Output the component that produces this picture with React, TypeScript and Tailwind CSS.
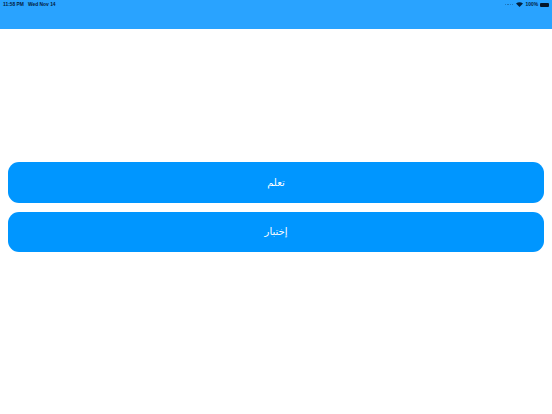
import React from "react";

const Btn = ({ label }: { label: string }) => (
  <button className="h-[40.5px] w-full rounded-[11px] bg-[#0096ff] text-white text-[10px] font-['DejaVu_Sans',serif] flex items-center justify-center">
    <span dir="rtl">{label}</span>
  </button>
);

export default function App() {
  return (
    <div className="w-[552px] h-[414px] bg-white flex flex-col overflow-hidden font-['Liberation_Sans',sans-serif]">
      <header className="h-[28.5px] shrink-0 bg-[#29a3ff] flex items-start justify-between pl-[3px] pr-[3px] pt-[1px] text-[4.9px] leading-[7px] text-[#04203c] font-bold">
        <div className="flex gap-[4px]">
          <span>11:58 PM</span>
          <span>Wed Nov 14</span>
        </div>
        <div className="flex items-center gap-[2px]">
          <span className="flex gap-[1px] mr-[1px]">
            <i className="w-[1.2px] h-[1.2px] rounded-full bg-[#1a6fb0]" />
            <i className="w-[1.2px] h-[1.2px] rounded-full bg-[#1a6fb0]" />
            <i className="w-[1.2px] h-[1.2px] rounded-full bg-[#1a6fb0]" />
            <i className="w-[1.2px] h-[1.2px] rounded-full bg-[#1a6fb0]" />
          </span>
          <svg width="7" height="5" viewBox="0 0 14 10" className="mr-[0.5px]">
            <path d="M7 10 L0 3 Q7 -2 14 3 Z" fill="#04203c" />
          </svg>
          <span>100%</span>
          <span className="w-[9px] h-[4px] rounded-[1px] bg-[#04162b]" />
        </div>
      </header>
      <main className="flex flex-col gap-[9px] px-[8px] pt-[133.5px]">
        <Btn label="تعلم" />
        <Btn label="إختبار" />
      </main>
    </div>
  );
}
